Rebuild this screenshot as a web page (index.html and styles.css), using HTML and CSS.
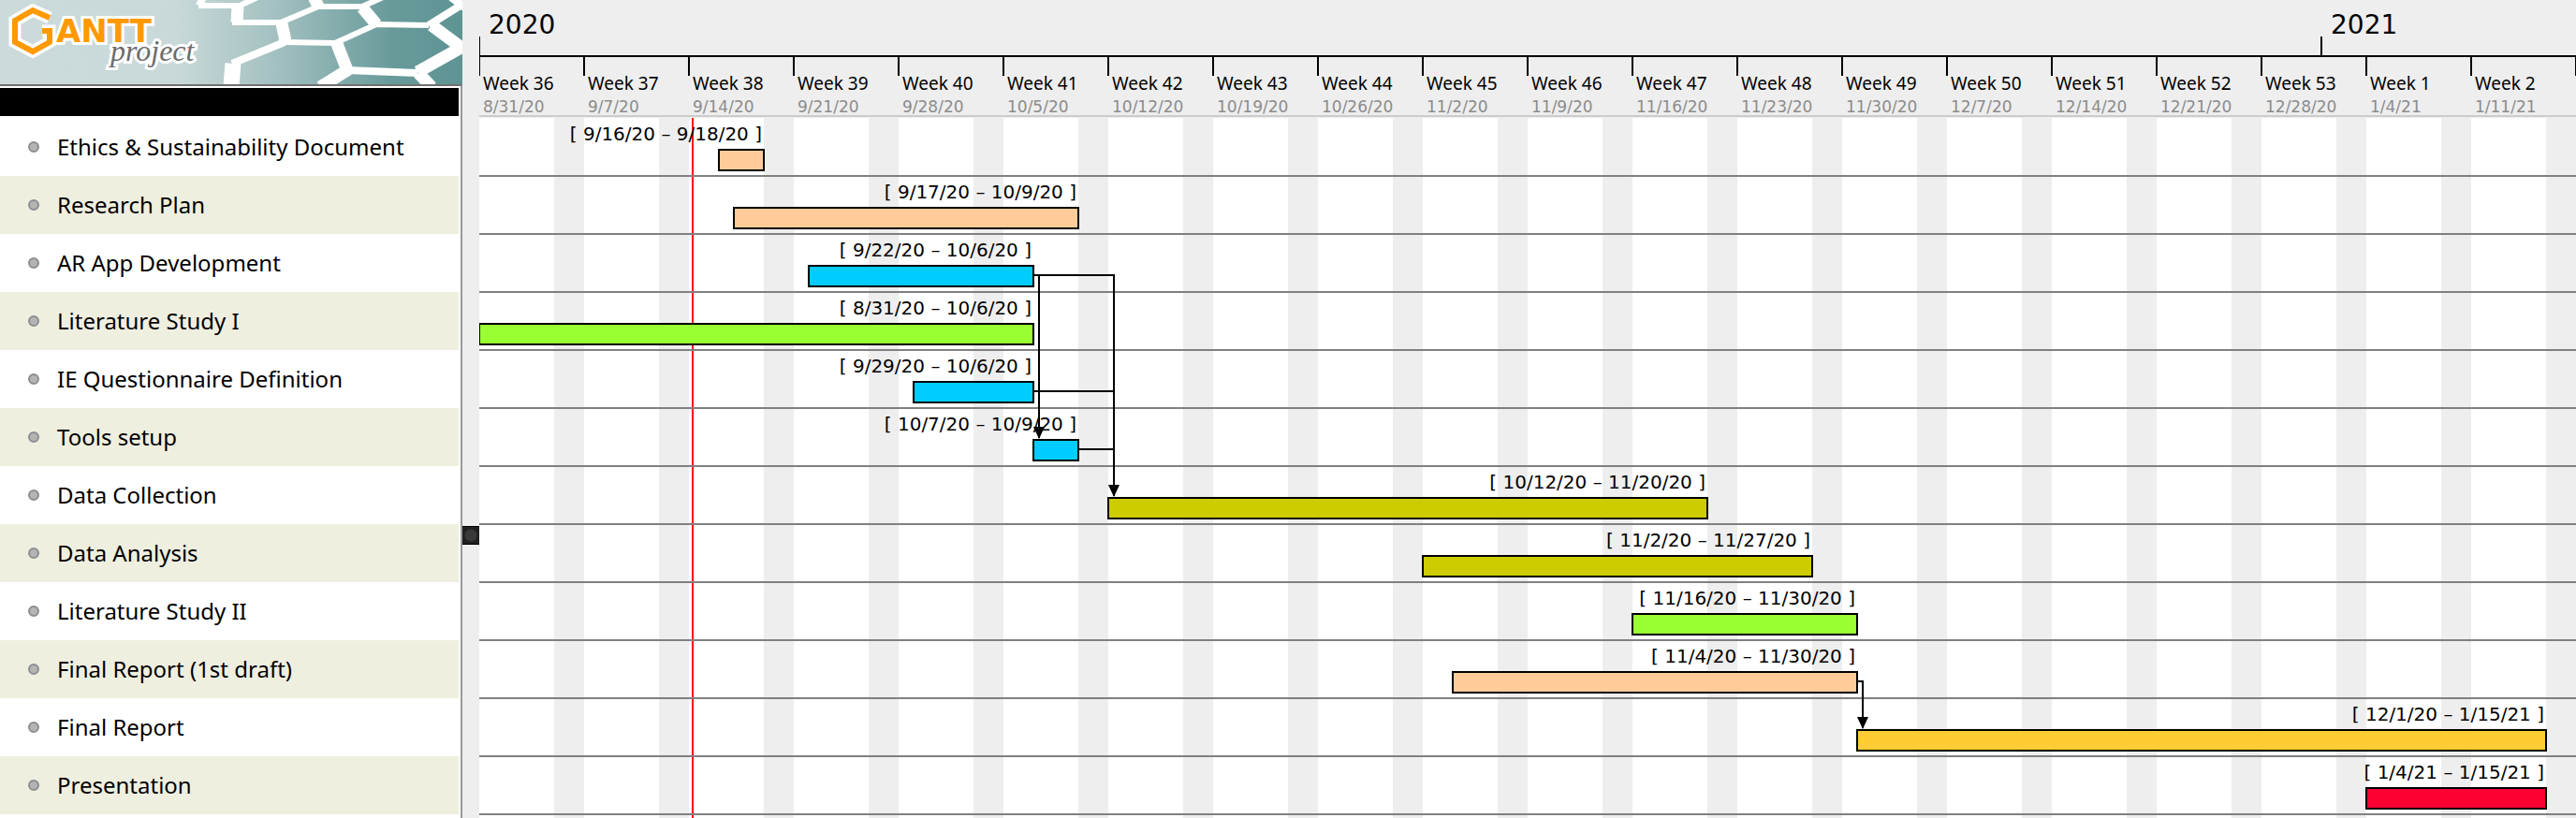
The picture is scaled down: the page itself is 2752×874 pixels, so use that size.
FILE: index.html
```html
<!DOCTYPE html>
<html lang="en">
<head>
<meta charset="utf-8">
<title>GanttProject</title>
<link rel="stylesheet" href="styles.css">
</head>
<body>
<div class="app">
  <aside class="side">
    <svg class="logo" viewBox="0 0 494 90" preserveAspectRatio="xMinYMin slice" role="img" aria-label="Gantt project">
      <defs>
        <linearGradient id="sky" x1="0" x2="1" y1="0" y2="0">
          <stop offset="0" stop-color="#ccdada"/>
          <stop offset=".38" stop-color="#c9d9d9"/>
          <stop offset=".6" stop-color="#a3c0c0"/>
          <stop offset=".85" stop-color="#689a9a"/>
          <stop offset="1" stop-color="#5f9494"/>
        </linearGradient>
      </defs>
      <rect width="494" height="90" fill="url(#sky)"/>
      <g class="cells">
        <path stroke-width="6" d="M212 6H256L282 -6M248 24H300L340 7H387L416 -6M402 26L458 27M304 45L358 46L402 26"/>
        <path stroke-width="8" d="M304 45L248 68M370 75L446 78M458 27L498 2M478 -6L496 8M213 6L218 -6"/>
        <path stroke-width="13" d="M254 7L253 24M334 -6L340 7M387 8L402 26M301 25L305 44M461 27L496 53M360 47L371 75L342 93M446 77L496 49M447 78L461 93"/>
        <path stroke-width="17" d="M249 68L247 92"/>
      </g>
      <path class="hex hex-halo" d="M53 19L35 11L16 22V45L35 55L53 45V33H45"/>
      <path class="hex" d="M53 19L35 11L16 22V45L35 55L53 45V33H45"/>
      <text class="gantt" x="60" y="45">ANTT</text>
      <text class="project" x="118" y="65">project</text>
    </svg>
    <div class="side-head"></div>
    <ul class="tasks">
      <li>Ethics &amp; Sustainability Document</li>
      <li>Research Plan</li>
      <li>AR App Development</li>
      <li>Literature Study I</li>
      <li>IE Questionnaire Definition</li>
      <li>Tools setup</li>
      <li>Data Collection</li>
      <li>Data Analysis</li>
      <li>Literature Study II</li>
      <li>Final Report (1st draft)</li>
      <li>Final Report</li>
      <li>Presentation</li>
    </ul>
  </aside>
  <div class="splitter"><button class="grip" aria-label="Resize panels"></button></div>
  <main class="chart">
    <header class="scale">
      <div class="years">
        <span style="grid-column:1/124">2020</span>
        <span style="grid-column:124/141">2021</span>
      </div>
      <div class="weeks">
        <div>Week 36<small>8/31/20</small></div>
        <div>Week 37<small>9/7/20</small></div>
        <div>Week 38<small>9/14/20</small></div>
        <div>Week 39<small>9/21/20</small></div>
        <div>Week 40<small>9/28/20</small></div>
        <div>Week 41<small>10/5/20</small></div>
        <div>Week 42<small>10/12/20</small></div>
        <div>Week 43<small>10/19/20</small></div>
        <div>Week 44<small>10/26/20</small></div>
        <div>Week 45<small>11/2/20</small></div>
        <div>Week 46<small>11/9/20</small></div>
        <div>Week 47<small>11/16/20</small></div>
        <div>Week 48<small>11/23/20</small></div>
        <div>Week 49<small>11/30/20</small></div>
        <div>Week 50<small>12/7/20</small></div>
        <div>Week 51<small>12/14/20</small></div>
        <div>Week 52<small>12/21/20</small></div>
        <div>Week 53<small>12/28/20</small></div>
        <div>Week 1<small>1/4/21</small></div>
        <div>Week 2<small>1/11/21</small></div>
        <i class="end"></i>
      </div>
    </header>
    <div class="plot">
      <div class="today"></div>
      <div class="row"><div class="task" style="grid-column:17/20"><span>[ 9/16/20 – 9/18/20 ]</span><b class="bar peach"></b></div></div>
      <div class="row"><div class="task" style="grid-column:18/41"><span>[ 9/17/20 – 10/9/20 ]</span><b class="bar peach"></b></div></div>
      <div class="row"><div class="task" style="grid-column:23/38"><span>[ 9/22/20 – 10/6/20 ]</span><b class="bar blue"></b></div></div>
      <div class="row"><div class="task" style="grid-column:1/38"><span>[ 8/31/20 – 10/6/20 ]</span><b class="bar green"></b></div></div>
      <div class="row"><div class="task" style="grid-column:30/38"><span>[ 9/29/20 – 10/6/20 ]</span><b class="bar blue"></b></div></div>
      <div class="row"><div class="task" style="grid-column:38/41"><span>[ 10/7/20 – 10/9/20 ]</span><b class="bar blue"></b></div></div>
      <div class="row"><div class="task" style="grid-column:43/83"><span>[ 10/12/20 – 11/20/20 ]</span><b class="bar olive"></b></div></div>
      <div class="row"><div class="task" style="grid-column:64/90"><span>[ 11/2/20 – 11/27/20 ]</span><b class="bar olive"></b></div></div>
      <div class="row"><div class="task" style="grid-column:78/93"><span>[ 11/16/20 – 11/30/20 ]</span><b class="bar green"></b></div></div>
      <div class="row"><div class="task" style="grid-column:66/93"><span>[ 11/4/20 – 11/30/20 ]</span><b class="bar peach"></b></div></div>
      <div class="row"><div class="task" style="grid-column:93/139"><span>[ 12/1/20 – 1/15/21 ]</span><b class="bar amber"></b></div></div>
      <div class="row"><div class="task" style="grid-column:127/139"><span>[ 1/4/21 – 1/15/21 ]</span><b class="bar red"></b></div></div>
      <svg class="links" viewBox="0 0 2240 745" preserveAspectRatio="none" aria-hidden="true">
        <path class="wire" d="M593 168H678V404M598 168V342M593 292H678M641 354H678M1473 602H1478V652"/>
        <path d="M672 392H684L678 405ZM592 330H604L598 343ZM1472 640H1484L1478 653Z"/>
      </svg>
    </div>
  </main>
</div>
</body>
</html>
```
FILE: styles.css
```css
*, ::before { box-sizing: border-box; }
body { margin: 0; background: #eee; color: #000; font-family: "DejaVu Sans", sans-serif; }
.app { display: grid; grid-template-columns: 494px 18px minmax(0, 1fr); min-height: 100vh; }

.side { display: flex; flex-direction: column; background: #fff; }
.logo { display: block; height: 90px; width: 100%; }
.cells path { fill: none; stroke: #fff; stroke-linejoin: round; }
.hex { fill: none; stroke: #f90; stroke-width: 6; }
.hex-halo { stroke: #fff; stroke-width: 13; }
.gantt { font: 700 34px "DejaVu Sans", sans-serif; fill: #f90; stroke: #fff; stroke-width: 6px; paint-order: stroke; }
.project { font: italic 32px "Liberation Serif", serif; fill: #6c6c6c; stroke: #fff; stroke-width: 6px; paint-order: stroke; }
.side-head { height: 34px; border-top: 2px solid #707070; border-right: 2px solid #999; padding: 2px 2px 0 0; background: #000 content-box; }
.tasks { flex: 1; margin: 0; padding: 2px 2px 0 0; list-style: none; border-right: 2px solid #999; }
.tasks li { display: flex; align-items: center; gap: 19px; height: 62px; padding-left: 30px; font: 24px/30px "Noto Sans", sans-serif; }
.tasks li:nth-child(even) { background: #efefe0; }
.tasks li::before { content: ""; width: 12px; height: 12px; border-radius: 50%; border: 2px solid #8d8d92; background: #b4b4b4; }

.splitter { display: flex; }
.grip { width: 18px; height: 20px; margin-top: 562px; padding: 0; border: 0; border-block: 1px solid #000; background: radial-gradient(circle, #3a3a3a 0 6px, #202020 7px); }

.chart { display: flex; flex-direction: column; min-width: 0; }
.scale { position: relative; height: 126px; overflow: hidden; }
.years { display: grid; grid-template-columns: repeat(140, minmax(0, 1fr)); height: 61px; border-bottom: 2px solid #000; font-size: 28px; line-height: 32px; }
.years span { position: relative; padding: 11px 0 0 10px; }
.years span::before { content: ""; position: absolute; left: -1px; bottom: 0; width: 2px; height: 20px; background: #000; }
.weeks { position: relative; display: grid; grid-template-columns: repeat(20, minmax(0, 1fr)); height: 64px; border-bottom: 2px solid #ccc; }
.weeks div { position: relative; padding: 16px 0 0 4px; font: 19px/24px "Noto Sans", sans-serif; white-space: nowrap; }
.weeks div::before, .end { content: ""; position: absolute; left: -1px; top: 0; width: 2px; height: 20px; background: #000; }
.weeks .end { left: auto; right: -1px; }
.weeks small { display: block; font: 17px/26px "DejaVu Sans", sans-serif; color: #8c8c8c; }

.plot { position: relative; flex: 1; padding-top: 1px; overflow: hidden; background: linear-gradient(to right, #fff calc(500% / 7), #eee 0) 0 0 / 5% 100%; }
.today { position: absolute; top: 0; bottom: 0; left: calc(1425% / 140); width: 2px; margin-left: -1px; background: #f00; }
.row { position: relative; display: grid; grid-template-columns: repeat(140, minmax(0, 1fr)); height: 62px; border-bottom: 2px solid #808080; }
.task { display: flex; flex-direction: column; align-items: flex-end; gap: 4px; margin: 0 -1px; padding-top: 4px; }
.task span { padding-right: 3px; font-size: 20px; line-height: 24px; white-space: nowrap; }
.bar { width: 100%; height: 24px; border: 2px solid #000; }
.peach { background: #fc9; }
.blue { background: #0cf; }
.green { background: #9f3; }
.olive { background: #cc0; }
.amber { background: #fc3; }
.red { background: #f03; }
.links { position: absolute; top: 0; left: 0; width: 100%; height: 745px; }
.wire { fill: none; stroke: #000; stroke-width: 2; }
```
